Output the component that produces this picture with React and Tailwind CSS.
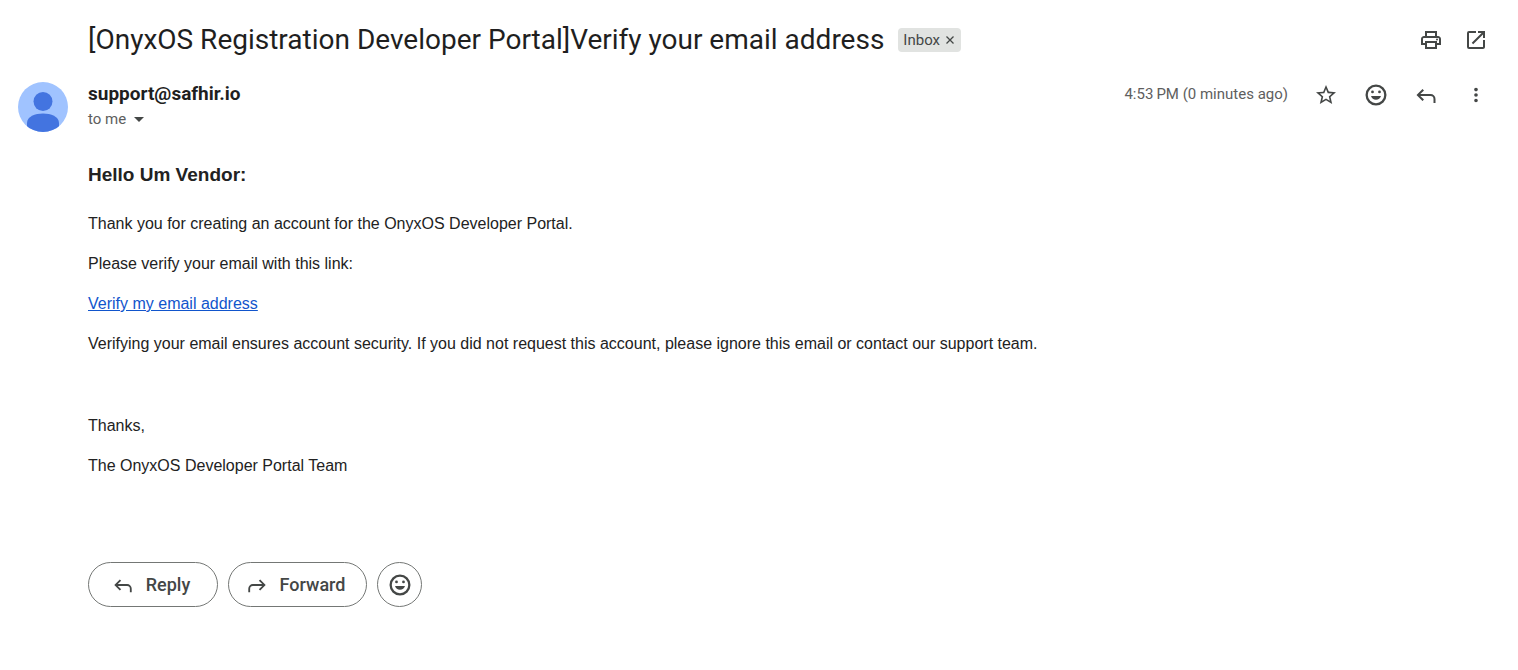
import React from "react";

function Icon({ size, path, className = "" }) {
  return (
    <svg
      width={size}
      height={size}
      viewBox="0 0 24 24"
      fill="currentColor"
      aria-hidden="true"
      className={className}
    >
      <path d={path} />
    </svg>
  );
}

const icons = {
  print:
    "M19 8h-1V3H6v5H5c-1.66 0-3 1.34-3 3v6h4v4h12v-4h4v-6c0-1.66-1.34-3-3-3zM8 5h8v3H8V5zm8 12v2H8v-4h8v2zm2-2v-2H6v2H4v-4c0-.55.45-1 1-1h14c.55 0 1 .45 1 1v4h-2zM18 10.5a1 1 0 1 0 0 2 1 1 0 0 0 0-2z",
  open:
    "M19 19H5V5h7V3H5a2 2 0 0 0-2 2v14a2 2 0 0 0 2 2h14c1.1 0 2-.9 2-2v-7h-2v7zM14 3v2h3.59l-9.83 9.83 1.41 1.41L19 6.41V10h2V3h-7z",
  star:
    "M22 9.24l-7.19-.62L12 2 9.19 8.63 2 9.24l5.46 4.73L5.82 21 12 17.27 18.18 21l-1.63-7.03L22 9.24zM12 15.4l-3.76 2.27 1-4.28-3.32-2.88 4.38-.38L12 6.1l1.71 4.04 4.38.38-3.32 2.88 1 4.28L12 15.4z",
  mood:
    "M12 1.5a10.5 10.5 0 1 0 0 21 10.5 10.5 0 0 0 0-21zm0 18.7a8.2 8.2 0 1 1 0-16.4 8.2 8.2 0 0 1 0 16.4zM8.5 7.5a1.4 1.4 0 1 0 0 2.8 1.4 1.4 0 0 0 0-2.8zm7 0a1.4 1.4 0 1 0 0 2.8 1.4 1.4 0 0 0 0-2.8zM7 13c.6 2.4 2.600 3.800 5 3.800s4.400-1.400 5-3.800z",
  reply:
    "M19.5 20v-4a3 3 0 0 0-3-3H6.3l3.7 3.6L8.5 18l-6-6 6-6L10 7.4 6.3 11h10.2a5 5 0 0 1 5 5v4z",
  more:
    "M12 8c1.1 0 2-.9 2-2s-.9-2-2-2-2 .9-2 2 .9 2 2 2zm0 2a2 2 0 1 0 0 4 2 2 0 0 0 0-4zm0 6a2 2 0 1 0 0 4 2 2 0 0 0 0-4z",
};

function IconButton({ label, path, size = 24 }) {
  return (
    <button type="button" aria-label={label} className="flex size-6 items-center justify-center">
      <Icon size={size} path={path} className="shrink-0" />
    </button>
  );
}

export default function App() {
  return (
    <main className="bg-white font-['Roboto',sans-serif] text-[#1f1f1f]">
      <header className="flex items-center pt-5 pr-[30px] pl-[88px]">
        <h1 className="text-[28px] leading-10">
          [OnyxOS Registration Developer Portal]Verify your email address
        </h1>
        <div className="ml-[14px] flex h-6 items-center gap-1 rounded bg-[#e1e3e1] px-[5px] text-[15px] text-[#444746]">
          <span>Inbox</span>
          <button type="button" aria-label="Remove label Inbox">
            <svg width="12" height="12" viewBox="0 0 12 12" stroke="currentColor" strokeWidth="1.3">
              <path d="M2.5 2.5l7 7M9.5 2.5l-7 7" />
            </svg>
          </button>
        </div>
        <div className="ml-auto flex gap-[21px] text-[#444746]">
          <IconButton label="Print all" path={icons.print} />
          <IconButton label="Open in new window" path={icons.open} />
        </div>
      </header>

      <section className="flex items-start pt-[22px] pr-[30px] pl-[18px]">
        <svg width="50" height="50" viewBox="0 0 50 50" className="mr-5 shrink-0" role="img" aria-label="Sender">
          <clipPath id="face">
            <circle cx="25" cy="25" r="25" />
          </clipPath>
          <g clipPath="url(#face)">
            <rect width="50" height="50" fill="#a0c3ff" />
            <circle cx="25" cy="19.5" r="9.5" fill="#4374e0" />
            <path d="M9 50V41C9 34.5 17 31.5 25 31.5S41 34.5 41 41V50z" fill="#4374e0" />
          </g>
        </svg>
        <div>
          <p className="text-[19px] leading-6 font-bold">support@safhir.io</p>
          <button type="button" className="mt-px flex items-center gap-2 text-[15px] leading-6 text-[#5e5e5e]">
            to me
            <svg width="10" height="5" viewBox="0 0 10 5" fill="#444746">
              <path d="M0 0h10L5 5z" />
            </svg>
          </button>
        </div>
        <div className="ml-auto flex items-start text-[#444746]">
          <time className="mr-[26px] text-[15px] leading-6 text-[#5e5e5e]">{"4:53\u2009PM (0 minutes ago)"}</time>
          <div className="flex gap-[26px] pt-px">
            <IconButton label="Star" path={icons.star} />
            <IconButton label="Add reaction" path={icons.mood} />
            <IconButton label="Reply" path={icons.reply} />
            <IconButton label="More" path={icons.more} size={22} />
          </div>
        </div>
      </section>

      <article className="flex flex-col gap-4 px-[88px] pt-[30px] font-['Liberation_Sans',Arial,sans-serif] text-base text-[#222222]">
        <h2 className="mb-2 text-[19px] leading-[26px] font-bold">Hello Um Vendor:</h2>
        <p>Thank you for creating an account for the OnyxOS Developer Portal.</p>
        <p>Please verify your email with this link:</p>
        <p>
          <a href="#verify" className="text-[#1155cc] underline">
            Verify my email address
          </a>
        </p>
        <p>
          Verifying your email ensures account security. If you did not request this account, please
          ignore this email or contact our support team.
        </p>
        <p className="mt-[42px]">Thanks,</p>
        <p>The OnyxOS Developer Portal Team</p>
      </article>

      <footer className="flex gap-[10px] px-[88px] pt-[84px] text-lg font-medium text-[#444746]">
        <button type="button" className="flex h-[45px] w-[130px] items-center justify-center gap-3 rounded-full border border-[#747775] pr-1">
          <Icon size={22} path={icons.reply} />
          Reply
        </button>
        <button type="button" className="flex h-[45px] w-[139px] items-center justify-center gap-3 rounded-full border border-[#747775] pr-1">
          <Icon size={22} path={icons.reply} className="-scale-x-100" />
          Forward
        </button>
        <button type="button" aria-label="Add reaction" className="flex size-[45px] items-center justify-center rounded-full border border-[#747775]">
          <Icon size={24} path={icons.mood} />
        </button>
      </footer>
    </main>
  );
}
